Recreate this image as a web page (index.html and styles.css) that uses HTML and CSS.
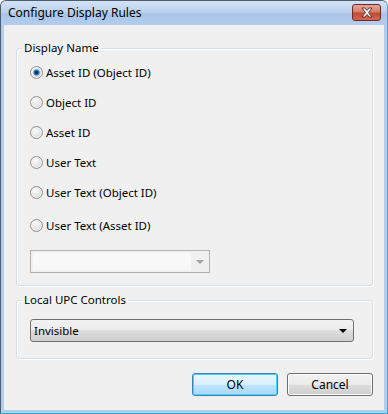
FILE: index.html
```html
<!DOCTYPE html>
<html lang="en">
<head>
  <meta charset="UTF-8">
  <title>Configure Display Rules</title>
  <link rel="stylesheet" href="styles.css">
</head>
<body>
  <div class="window">
    <div class="titlebar">
      <span class="title">Configure Display Rules</span>
      <button class="close" aria-label="Close">
        <svg width="16" height="11" viewBox="0 0 16 11">
          <path d="M3 1 L6 1 L8 3.5 L10 1 L13 1 L9.5 5.5 L13 10 L10 10 L8 7.5 L6 10 L3 10 L6.5 5.5 Z" fill="#fff" stroke="#5a2a26" stroke-width="0.9" stroke-linejoin="round"/>
        </svg>
      </button>
    </div>
    <div class="client">
      <fieldset class="group group-names">
        <legend>Display Name</legend>
        <div class="radios">
          <label class="radio checked"><span class="dot"></span>Asset ID (Object ID)</label>
          <label class="radio"><span class="dot"></span>Object ID</label>
          <label class="radio"><span class="dot"></span>Asset ID</label>
          <label class="radio"><span class="dot"></span>User Text</label>
          <label class="radio"><span class="dot"></span>User Text (Object ID)</label>
          <label class="radio"><span class="dot"></span>User Text (Asset ID)</label>
        </div>
        <div class="combo-disabled">
          <span class="field"></span>
          <span class="arrow"></span>
        </div>
      </fieldset>
      <fieldset class="group group-upc">
        <legend>Local UPC Controls</legend>
        <div class="combo">
          <span class="value">Invisible</span>
          <span class="arrow"></span>
        </div>
      </fieldset>
      <div class="buttons">
        <button class="btn default">OK</button>
        <button class="btn">Cancel</button>
      </div>
    </div>
  </div>
</body>
</html>
```

FILE: styles.css
```css
body {
  margin: 0;
  background: #fff;
  font-family: "Noto Sans", "Open Sans", sans-serif;
  font-size: 11.5px;
  color: #000;
}
.window {
  width: 388px;
  height: 414px;
  box-sizing: border-box;
  border: 1px solid #4e5d70;
  border-bottom-color: #2fb0d8;
  border-right-color: #2fb0d8;
  border-radius: 6px 6px 0 0;
  background: #b3cdec;
  display: flex;
  flex-direction: column;
}
.titlebar {
  height: 24px;
  display: flex;
  align-items: center;
  justify-content: space-between;
  padding: 0 6px 0 7px;
  background: linear-gradient(to bottom, #d3e2f4 0%, #bcd2ee 45%, #a8c5e9 55%, #b3cdec 100%);
  border-radius: 5px 5px 0 0;
}
.title {
  font-size: 12px;
  margin-top: -1px;
}
.close {
  width: 29px;
  height: 17px;
  margin-top: -2px;
  padding: 0;
  border: 1px solid #6b2a24;
  border-radius: 3px;
  background: linear-gradient(to bottom, #e4a59a 0%, #d87d6c 45%, #c24a33 55%, #d06a50 100%);
  display: flex;
  align-items: center;
  justify-content: center;
}
.client {
  flex: 1;
  margin: 0 3px 3px 3px;
  background: #f0f0f0;
  padding: 15px 0 0 12px;
  display: flex;
  flex-direction: column;
}
.group {
  margin: 0;
  width: 357px;
  box-sizing: border-box;
  border: 1px solid #d5dfe5;
  border-radius: 3px;
  padding: 0 12px 0 13px;
  box-shadow: inset 1px 1px 0 #fff, 1px 1px 0 #fff;
}
.group legend {
  margin-left: -8px;
  padding: 0 2px;
  line-height: 16px;
  color: #000;
}
.group-names {
  height: 246px;
}
.radios {
  padding-top: 1px;
}
.radio {
  display: flex;
  align-items: center;
  height: 30px;
}
.radio:last-child {
  height: 34px;
  padding-top: 3px;
  box-sizing: border-box;
}
.dot {
  width: 11px;
  height: 11px;
  border-radius: 50%;
  border: 1px solid #8e8f8f;
  background: radial-gradient(circle at 40% 35%, #fcfcfc 0%, #e6e6e6 50%, #cfcfcf 100%);
  margin: 0 3px 0 0;
  box-shadow: inset 0 0 0 1px #f4f4f4;
  display: flex;
  align-items: center;
  justify-content: center;
}
.radio.checked .dot::after {
  content: "";
  width: 5px;
  height: 5px;
  border-radius: 50%;
  background: radial-gradient(circle at 50% 50%, #0d2440 0%, #0f3b72 40%, #2f85d0 80%);
  border: 1px solid #4d9ae0;
}
.combo-disabled {
  margin-top: 9px;
  width: 180px;
  height: 23px;
  box-sizing: border-box;
  border: 1px solid #adb2b5;
  display: flex;
  background: #f0f0f0;
}
.combo-disabled .field {
  flex: 1;
  margin: 2px 0 2px 2px;
  background: #f8f8f8;
}
.combo-disabled .arrow {
  width: 18px;
  display: flex;
  align-items: center;
  justify-content: center;
}
.combo-disabled .arrow::after {
  content: "";
  border-left: 4px solid transparent;
  border-right: 4px solid transparent;
  border-top: 4px solid #a0a0a0;
}
.group-upc {
  margin-top: 6px;
  height: 67px;
}
.combo {
  margin-top: 11px;
  width: 324px;
  height: 23px;
  box-sizing: border-box;
  border: 1px solid #707070;
  border-radius: 3px;
  background: linear-gradient(to bottom, #f2f2f2 0%, #ebebeb 50%, #dddddd 50%, #cfcfcf 100%);
  display: flex;
  align-items: center;
  padding: 0 6px 0 3px;
}
.combo .value {
  flex: 1;
}
.combo .arrow {
  border-left: 4px solid transparent;
  border-right: 4px solid transparent;
  border-top: 4px solid #000;
}
.buttons {
  display: flex;
  justify-content: flex-end;
  gap: 9px;
  margin-top: 14px;
  padding-right: 11px;
}
.btn {
  width: 86px;
  height: 23px;
  font-family: inherit;
  font-size: 12px;
  color: #000;
  border: 1px solid #707070;
  border-radius: 3px;
  background: linear-gradient(to bottom, #f2f2f2 0%, #ebebeb 50%, #dddddd 50%, #cfcfcf 100%);
  box-shadow: inset 0 0 0 1px #fcfcfc;
  padding: 0;
}
.btn.default {
  border-color: #3c7fb1;
  background: linear-gradient(to bottom, #eaf6fd 0%, #d9f0fc 50%, #bee6fd 50%, #a7d9f5 100%);
  box-shadow: inset 0 0 0 1px #48d4f8;
}
```
